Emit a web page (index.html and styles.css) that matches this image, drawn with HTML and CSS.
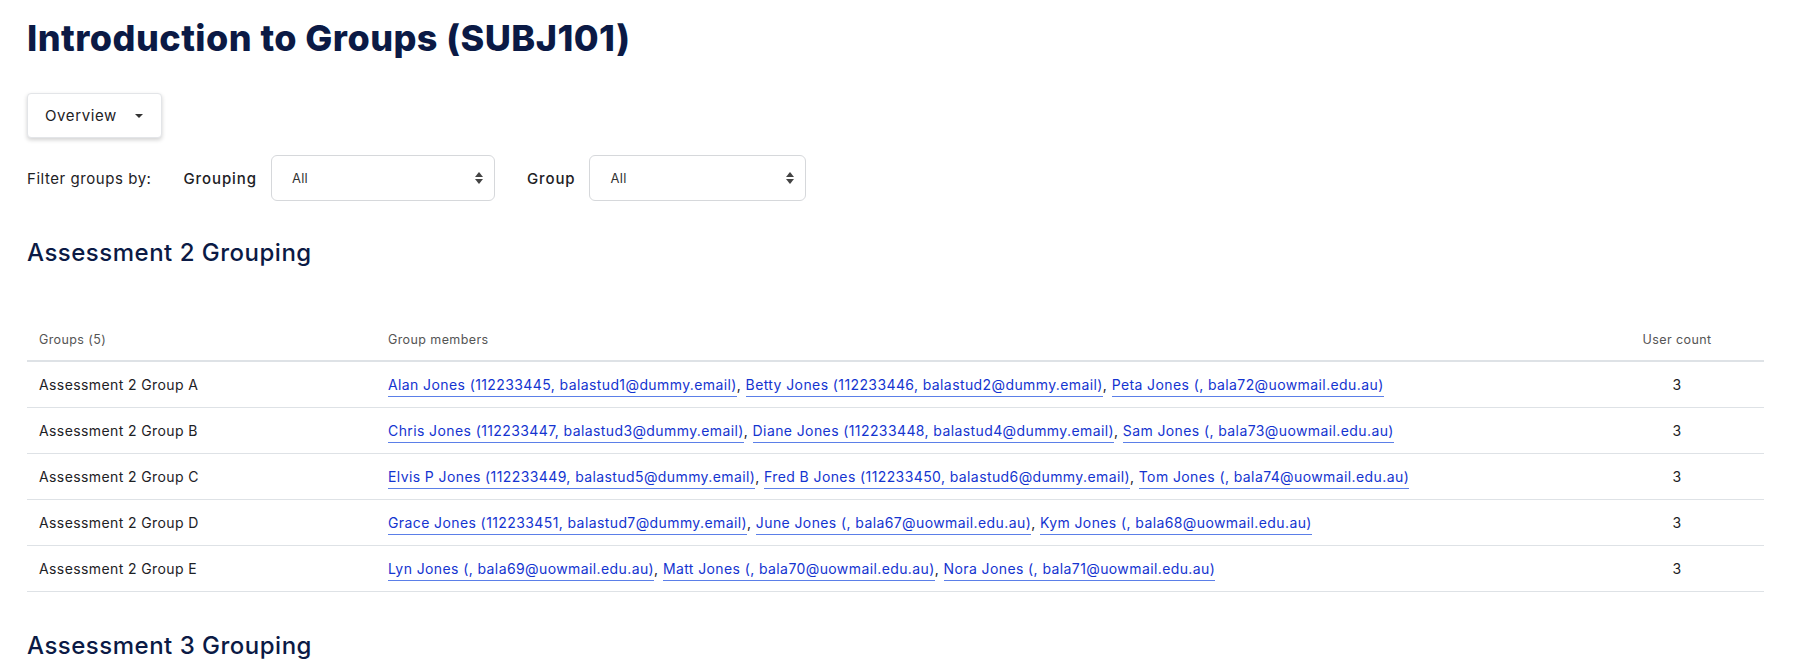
FILE: index.html
```html
<!DOCTYPE html>
<html lang="en">
<head>
    <meta charset="UTF-8">
    <meta name="viewport" content="width=device-width, initial-scale=1.0">
    <title>Groups overview</title>
    <link rel="stylesheet" href="styles.css">
</head>
<body>
    <div class="page">
        <h1 class="page-title">Introduction to Groups (SUBJ101)</h1>

        <div class="nav-select">
            <button class="nav-button">Overview <span class="caret"></span></button>
        </div>

        <div class="filters">
            <span class="filter-intro">Filter groups by:</span>
            <label class="filter-label">Grouping</label>
            <div class="select select-grouping">All</div>
            <label class="filter-label">Group</label>
            <div class="select select-group">All</div>
        </div>

        <h3 class="grouping-title">Assessment 2 Grouping</h3>

        <table class="groups">
            <colgroup>
                <col class="col-name">
                <col class="col-members">
                <col class="col-count">
            </colgroup>
            <thead>
                <tr>
                    <th>Groups (5)</th>
                    <th>Group members</th>
                    <th class="center">User count</th>
                </tr>
            </thead>
            <tbody>
                <tr>
                    <td>Assessment 2 Group A</td>
                    <td><a href="#">Alan Jones (112233445, balastud1@dummy.email)</a>, <a href="#">Betty Jones (112233446, balastud2@dummy.email)</a>, <a href="#">Peta Jones (, bala72@uowmail.edu.au)</a></td>
                    <td class="center">3</td>
                </tr>
                <tr>
                    <td>Assessment 2 Group B</td>
                    <td><a href="#">Chris Jones (112233447, balastud3@dummy.email)</a>, <a href="#">Diane Jones (112233448, balastud4@dummy.email)</a>, <a href="#">Sam Jones (, bala73@uowmail.edu.au)</a></td>
                    <td class="center">3</td>
                </tr>
                <tr>
                    <td>Assessment 2 Group C</td>
                    <td><a href="#">Elvis P Jones (112233449, balastud5@dummy.email)</a>, <a href="#">Fred B Jones (112233450, balastud6@dummy.email)</a>, <a href="#">Tom Jones (, bala74@uowmail.edu.au)</a></td>
                    <td class="center">3</td>
                </tr>
                <tr>
                    <td>Assessment 2 Group D</td>
                    <td><a href="#">Grace Jones (112233451, balastud7@dummy.email)</a>, <a href="#">June Jones (, bala67@uowmail.edu.au)</a>, <a href="#">Kym Jones (, bala68@uowmail.edu.au)</a></td>
                    <td class="center">3</td>
                </tr>
                <tr>
                    <td>Assessment 2 Group E</td>
                    <td><a href="#">Lyn Jones (, bala69@uowmail.edu.au)</a>, <a href="#">Matt Jones (, bala70@uowmail.edu.au)</a>, <a href="#">Nora Jones (, bala71@uowmail.edu.au)</a></td>
                    <td class="center">3</td>
                </tr>
            </tbody>
        </table>

        <h3 class="grouping-title last">Assessment 3 Grouping</h3>
    </div>
</body>
</html>
```

FILE: styles.css
```css
body {
    margin: 0;
    font-family: Inter, "Noto Sans", sans-serif;
    color: #1d2125;
    background: #fff;
}

.page {
    padding: 16px 36px 0 27px;
}

.page-title {
    margin: 0;
    font-size: 36px;
    font-weight: 800;
    line-height: 45px;
    color: #0b1a45;
    letter-spacing: 0.45px;
}

.nav-select {
    margin-top: 32px;
}

.nav-button {
    display: inline-flex;
    align-items: center;
    height: 45px;
    width: 135px;
    padding: 0 0 0 17px;
    font-family: inherit;
    font-size: 15px;
    letter-spacing: 0.6px;
    color: #1d2125;
    background: #fff;
    border: 1px solid #e3e5e8;
    border-radius: 4px;
    box-shadow: 0 2px 4px rgba(0, 0, 0, 0.18);
}

.caret {
    margin-left: 18px;
    border-top: 4px solid #333;
    border-left: 4px solid transparent;
    border-right: 4px solid transparent;
}

.filters {
    display: flex;
    align-items: center;
    margin-top: 17px;
    font-size: 15px;
    letter-spacing: 0.55px;
}

.filter-intro {
    margin-right: 32px;
}

.filter-label {
    margin-right: 14px;
    font-weight: 500;
    letter-spacing: 0.9px;
}

.select {
    position: relative;
    height: 46px;
    box-sizing: border-box;
    display: flex;
    align-items: center;
    padding-left: 20px;
    font-size: 13px;
    letter-spacing: 0.3px;
    color: #333;
    border: 1px solid #d6d8db;
    border-radius: 6px;
}

.select::before,
.select::after {
    content: "";
    position: absolute;
    right: 11px;
    border-left: 4px solid transparent;
    border-right: 4px solid transparent;
}

.select::before {
    top: 16px;
    border-bottom: 5px solid #444;
}

.select::after {
    top: 23px;
    border-top: 5px solid #444;
}

.select-grouping {
    width: 224px;
    margin-right: 32px;
}

.select-group {
    width: 217px;
}

.grouping-title {
    margin: 36px 0 0;
    font-size: 24px;
    font-weight: 500;
    line-height: 32px;
    letter-spacing: 0.5px;
    color: #0b1a45;
}

.grouping-title.last {
    margin-top: 38px;
}

.groups {
    width: 100%;
    margin-top: 50px;
    border-collapse: collapse;
    font-size: 14px;
    letter-spacing: 0.4px;
}

.col-name {
    width: 349px;
}

.col-count {
    width: 174px;
}

.groups th {
    text-align: left;
    font-weight: 400;
    font-size: 12.5px;
    color: #555;
    padding: 0 12px 13px;
    height: 28px;
    vertical-align: bottom;
    border-bottom: 2px solid #dee2e6;
}

.groups td {
    height: 45px;
    padding: 0 12px;
    border-bottom: 1px solid #dee2e6;
}

.groups .center {
    text-align: center;
}

.groups a {
    color: #1434d0;
    text-decoration: none;
    border-bottom: 1px solid #5b7fe8;
    padding-bottom: 3px;
}
```
